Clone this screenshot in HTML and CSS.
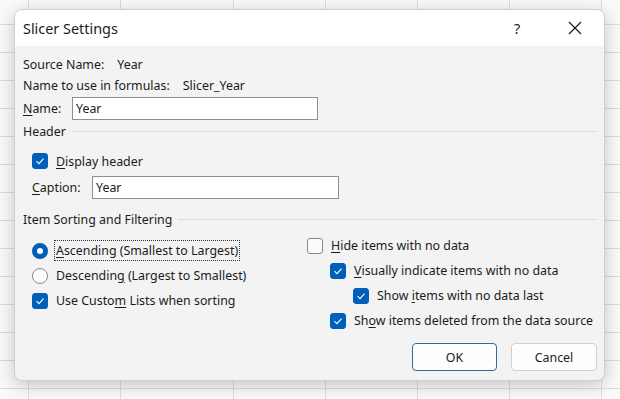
FILE: index.html
```html
<!DOCTYPE html>
<html>
<head>
    <meta charset='utf-8'>
    <title>Slicer Settings</title>
    <link rel="stylesheet" href="styles.css">
</head>
<body>
    <div class="sheet">
        <div></div><div></div><div></div><div></div><div></div><div></div><div></div><div></div>
    </div>
    <div class="dialog">
        <header class="titlebar">
            <span class="title">Slicer Settings</span>
            <span class="help">?</span>
            <span class="close">
                <svg width="14" height="14" viewBox="0 0 14 14"><path d="M1 1 L13 13 M13 1 L1 13" stroke="#1b1b1b" stroke-width="1.2" fill="none"/></svg>
            </span>
        </header>
        <div class="content">
            <div class="row">Source Name:<span class="value">Year</span></div>
            <div class="row">Name to use in formulas:<span class="value">Slicer_Year</span></div>
            <div class="row row-input">
                <label class="lbl-name"><u>N</u>ame:</label>
                <div class="textbox tb-name">Year</div>
            </div>

            <div class="group-title">Header</div>
            <div class="row row-check indent">
                <span class="check on"></span><span><u>D</u>isplay header</span>
            </div>
            <div class="row row-input row-caption indent">
                <label class="lbl-caption"><u>C</u>aption:</label>
                <div class="textbox tb-caption">Year</div>
            </div>

            <div class="group-title group-sort">Item Sorting and Filtering</div>
            <div class="options">
                <div class="col-left">
                    <div class="opt"><span class="radio on"></span><span class="focus"><u>A</u>scending (Smallest to Largest)</span></div>
                    <div class="opt"><span class="radio"></span><span>Descendin<u>g</u> (Largest to Smallest)</span></div>
                    <div class="opt"><span class="check on"></span><span>Use Custo<u>m</u> Lists when sorting</span></div>
                </div>
                <div class="col-right">
                    <div class="opt"><span class="check"></span><span><u>H</u>ide items with no data</span></div>
                    <div class="opt lv1"><span class="check on"></span><span><u>V</u>isually indicate items with no data</span></div>
                    <div class="opt lv2"><span class="check on"></span><span>Show <u>i</u>tems with no data last</span></div>
                    <div class="opt lv1"><span class="check on"></span><span>Sh<u>o</u>w items deleted from the data source</span></div>
                </div>
            </div>

            <div class="buttons">
                <button type="button" class="btn btn-default">OK</button>
                <button type="button" class="btn">Cancel</button>
            </div>
        </div>
    </div>
</body>
</html>
```

FILE: styles.css
```css
body {
    margin: 0;
    font-family: "Noto Sans", "Open Sans", sans-serif;
    font-size: 12.4px;
    color: #1b1b1b;
    overflow: hidden;
}
u {
    text-underline-offset: 2px;
}

/* spreadsheet behind */
.sheet {
    display: grid;
    grid-template-columns: 28px 92px 113px 92px 92px 92px 92px 1fr;
    height: 399px;
    background-color: #fafafa;
    background-image: repeating-linear-gradient(to bottom, transparent 0, transparent 27px, #dcdcdc 27px, #dcdcdc 28px);
    background-position: 0 -3px;
}
.sheet > div + div {
    border-left: 1px solid #dcdcdc;
}

/* dialog */
.dialog {
    position: absolute;
    left: 14px;
    top: 9px;
    width: 591px;
    height: 372px;
    box-sizing: border-box;
    border: 1px solid #cfcfcf;
    border-radius: 8px;
    background: #f3f3f3;
    box-shadow: 0 4px 18px rgba(0,0,0,0.22);
    overflow: hidden;
}
.titlebar {
    display: flex;
    align-items: center;
    height: 36px;
    padding-left: 8px;
    background: #fff;
    font-size: 14.4px;
}
.title {
    flex-grow: 1;
}
.help {
    width: 20px;
    margin-right: 38px;
    text-align: center;
}
.close {
    display: flex;
    justify-content: center;
    width: 20px;
    margin-right: 19px;
}

.content {
    padding: 8px 7px 0 8px;
}
.row {
    display: flex;
    align-items: center;
    height: 21px;
}
.value {
    margin-left: 13px;
}
.row-input {
    height: 25px;
}
.lbl-name {
    width: 49px;
}
.lbl-caption {
    width: 60px;
}
.textbox {
    display: flex;
    align-items: center;
    height: 23px;
    box-sizing: border-box;
    padding-left: 3px;
    border: 1px solid #8f8f8f;
    background: #fff;
}
.tb-name {
    width: 246px;
}
.tb-caption {
    width: 247px;
}
.indent {
    padding-left: 9px;
}

.group-title {
    display: flex;
    align-items: center;
    height: 21px;
}
.group-title::after {
    content: "";
    flex-grow: 1;
    height: 1px;
    margin-left: 6px;
    background: #dadada;
}
.row-check {
    height: 22px;
    margin-top: 8px;
}
.row-caption {
    height: 23px;
    margin-top: 4px;
}
.group-sort {
    margin-top: 10px;
}

/* checkboxes & radios */
.check, .radio {
    flex-shrink: 0;
    width: 16px;
    height: 16px;
    box-sizing: border-box;
    margin-right: 8px;
    border: 1px solid #878787;
    background: #fbfbfb;
}
.check {
    border-radius: 3px;
}
.check.on {
    border-color: #005fb8;
    background: #005fb8 url("data:image/svg+xml;utf8,<svg xmlns='http://www.w3.org/2000/svg' width='14' height='14'><path d='M3.5 7.2 L6 9.6 L10.5 4.6' stroke='white' stroke-width='1.1' fill='none'/></svg>") center no-repeat;
}
.radio {
    border-radius: 50%;
}
.radio.on {
    border: 5px solid #005fb8;
    background: #fff;
}
.focus {
    padding: 1px;
    margin-left: -2px;
    border: 1px dotted #333;
}

.options {
    display: grid;
    grid-template-columns: 284px 1fr;
}
.col-left {
    padding-top: 8px;
    padding-left: 9px;
}
.col-right {
    padding-top: 3px;
}
.opt {
    display: flex;
    align-items: center;
    height: 25px;
}
.lv1 {
    padding-left: 23px;
}
.lv2 {
    padding-left: 46px;
}

.buttons {
    display: flex;
    justify-content: flex-end;
    margin-top: 10px;
}
.buttons > * + * {
    margin-left: 14px;
}
.btn {
    width: 86px;
    height: 28px;
    border: 1px solid #d0d0d0;
    border-radius: 4px;
    background: #fdfdfd;
    font-family: inherit;
    font-size: 12.4px;
    color: #1b1b1b;
}
.btn-default {
    width: 85px;
    border-color: #2b6ca8;
}
```
